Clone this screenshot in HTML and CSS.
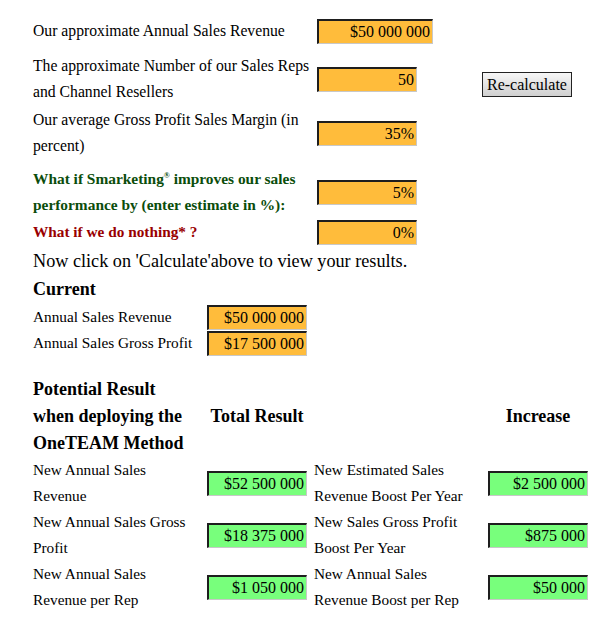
FILE: index.html
```html
<!DOCTYPE html>
<html lang="en">

<head>
    <meta charset="UTF-8">
    <meta name="viewport" content="width=device-width, initial-scale=1.0">
    <title>Sales Calculator</title>
    <link rel="stylesheet" href="styles.css">
</head>

<body>
    <div class="calc-container">

        <div class="calc-inputs">
            <div class="calc-row">
                <div class="label">Our approximate Annual Sales Revenue</div>
                <div class="field"><span class="box box-orange box-wide">$50 000 000</span></div>
            </div>

            <div class="calc-row row-2">
                <div class="label">The approximate Number of our Sales Reps<br>and Channel Resellers</div>
                <div class="field"><span class="box box-orange">50</span></div>
                <button class="recalc">Re-calculate</button>
            </div>

            <div class="calc-row row-3">
                <div class="label">Our average Gross Profit Sales Margin (in<br>percent)</div>
                <div class="field"><span class="box box-orange">35%</span></div>
            </div>

            <div class="calc-row row-4">
                <div class="label label-green">What if Smarketing<sup>&reg;</sup> improves our sales<br>performance by (enter estimate in %):</div>
                <div class="field"><span class="box box-orange">5%</span></div>
            </div>

            <div class="calc-row row-5">
                <div class="label label-red">What if we do nothing* ?</div>
                <div class="field"><span class="box box-orange">0%</span></div>
            </div>
        </div>

        <p class="calc-note">Now click on 'Calculate'above to view your results.</p>

        <h3 class="section-title">Current</h3>
        <div class="calc-current">
            <div class="label">Annual Sales Revenue</div>
            <div class="field"><span class="box box-orange">$50 000 000</span></div>
            <div class="label">Annual Sales Gross Profit</div>
            <div class="field"><span class="box box-orange">$17 500 000</span></div>
        </div>

        <div class="calc-results">
            <div class="result-head">Potential Result<br>when deploying the<br>OneTEAM Method</div>
            <div class="result-head centered">Total Result</div>
            <div></div>
            <div class="result-head centered">Increase</div>

            <div class="label">New Annual Sales<br>Revenue</div>
            <div class="field"><span class="box box-green">$52 500 000</span></div>
            <div class="label label-mid">New Estimated Sales<br>Revenue Boost Per Year</div>
            <div class="field"><span class="box box-green">$2 500 000</span></div>

            <div class="label">New Annual Sales Gross<br>Profit</div>
            <div class="field"><span class="box box-green">$18 375 000</span></div>
            <div class="label label-mid">New Sales Gross Profit<br>Boost Per Year</div>
            <div class="field"><span class="box box-green">$875 000</span></div>

            <div class="label">New Annual Sales<br>Revenue per Rep</div>
            <div class="field"><span class="box box-green">$1 050 000</span></div>
            <div class="label label-mid">New Annual Sales<br>Revenue Boost per Rep</div>
            <div class="field"><span class="box box-green">$50 000</span></div>
        </div>

    </div>
</body>

</html>
```

FILE: styles.css
```css
body {
    margin: 0;
    background: #ffffff;
    color: #000000;
    font-family: 'Liberation Serif', serif;
    font-size: 15.3px;
}

.calc-container {
    padding: 18px 0 0 33px;
}

/* top input block */
.calc-inputs {
    display: flex;
    flex-direction: column;
    font-size: 15.7px;
}

.calc-row {
    display: flex;
    align-items: center;
}

.calc-inputs .label {
    width: 284px;
}

.calc-inputs .field {
    width: 165px;
}

.row-2 {
    margin-top: 9px;
}

.row-3 {
    margin-top: 2px;
}

.row-4 {
    margin-top: 7px;
}

.row-5 {
    margin-top: 1px;
}

.label {
    line-height: 26px;
}

.label-green {
    color: #0b4d0b;
    font-weight: bold;
    font-size: 15.4px;
}

.label-red {
    color: #990000;
    font-weight: bold;
    font-size: 15.3px;
}

.label-green sup {
    font-size: 8px;
    line-height: 0;
}

.box {
    display: block;
    box-sizing: border-box;
    width: 100px;
    height: 25px;
    line-height: 22px;
    padding-right: 2px;
    font-size: 16px;
    text-align: right;
    border-top: 2px solid #1e1e1e;
    border-left: 2px solid #1e1e1e;
    border-bottom: 1px solid #c8c8c8;
    border-right: 1px solid #c8c8c8;
}

.box-wide {
    width: 116px;
}

.box-orange {
    background: #ffbc3b;
}

.box-green {
    background: #78ff7c;
}

.recalc {
    margin-top: 11px;
    font-family: 'Liberation Serif', serif;
    font-size: 16px;
    width: 90px;
    height: 25px;
    padding: 0;
    border: 1px solid #222222;
    background: linear-gradient(#f6f6f6, #d0d0d0);
    color: #000000;
}

.calc-note {
    margin: 0;
    padding-top: 3px;
    font-size: 18.2px;
    line-height: 26px;
}

.section-title {
    margin: 0;
    font-size: 18px;
    line-height: 30px;
}

/* current block */
.calc-current {
    display: grid;
    grid-template-columns: 174px 100px;
    grid-auto-rows: 26px;
    align-items: center;
}

/* results block */
.calc-results {
    display: grid;
    grid-template-columns: 174px 100px 181px 100px;
    align-items: center;
    margin-top: 20px;
}

.result-head {
    font-size: 18px;
    font-weight: bold;
    line-height: 27px;
}

.centered {
    text-align: center;
}

.label-mid {
    padding-left: 7px;
}
```
